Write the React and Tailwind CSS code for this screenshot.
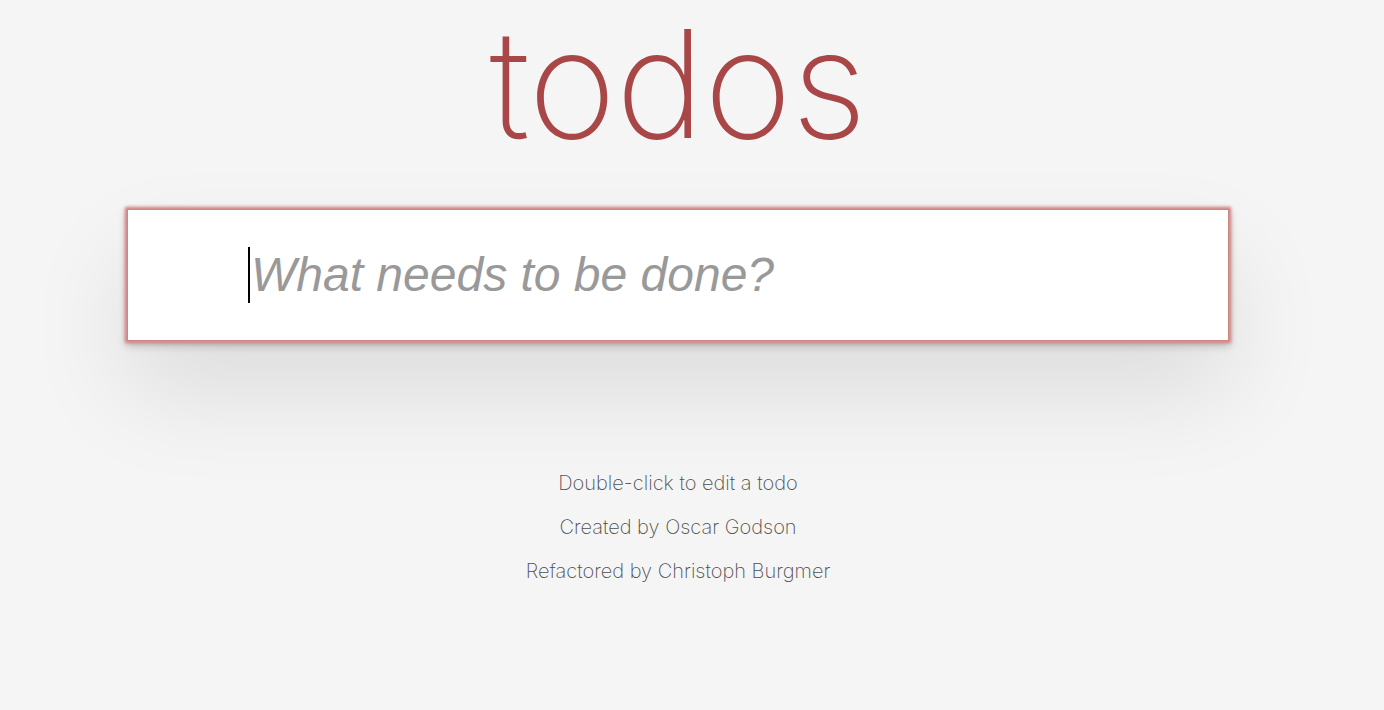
export default function App() {
  return (
    <div className="min-h-screen w-full bg-[#f5f5f5] overflow-hidden" style={{ fontFamily: 'Inter, "Helvetica Neue", "Liberation Sans", sans-serif' }}>
      <div className="w-[1356px] flex flex-col items-center">
        <h1 className="h-[208px] text-[150px] leading-[168px] font-[200] text-[#a94648] tracking-[-0.5px]" style={{ fontFamily: 'Inter, "Liberation Sans", sans-serif' }}>
          todos
        </h1>
        <section className="w-[1104px] p-[2px] shadow-[0_4px_8px_0_rgba(0,0,0,0.2),0_50px_100px_0_rgba(0,0,0,0.1)]">
          <div className="h-[130px] bg-white flex items-center pl-[120px] shadow-[0_0_3px_3px_#cf7d7d]">
            <span className="w-[2px] h-[56px] bg-black" />
            <span className="ml-[1px] text-[48px] italic font-[300] text-[#999999] leading-none" style={{ fontFamily: '"Liberation Sans", Arial, sans-serif' }}>
              What needs to be done?
            </span>
          </div>
        </section>
        <footer className="mt-[119px] flex flex-col items-center text-[20px] leading-[44px] font-[200] text-[#4f4f4f]">
          <p>Double-click to edit a todo</p>
          <p>Created by Oscar Godson</p>
          <p>Refactored by Christoph Burgmer</p>
        </footer>
      </div>
    </div>
  );
}
